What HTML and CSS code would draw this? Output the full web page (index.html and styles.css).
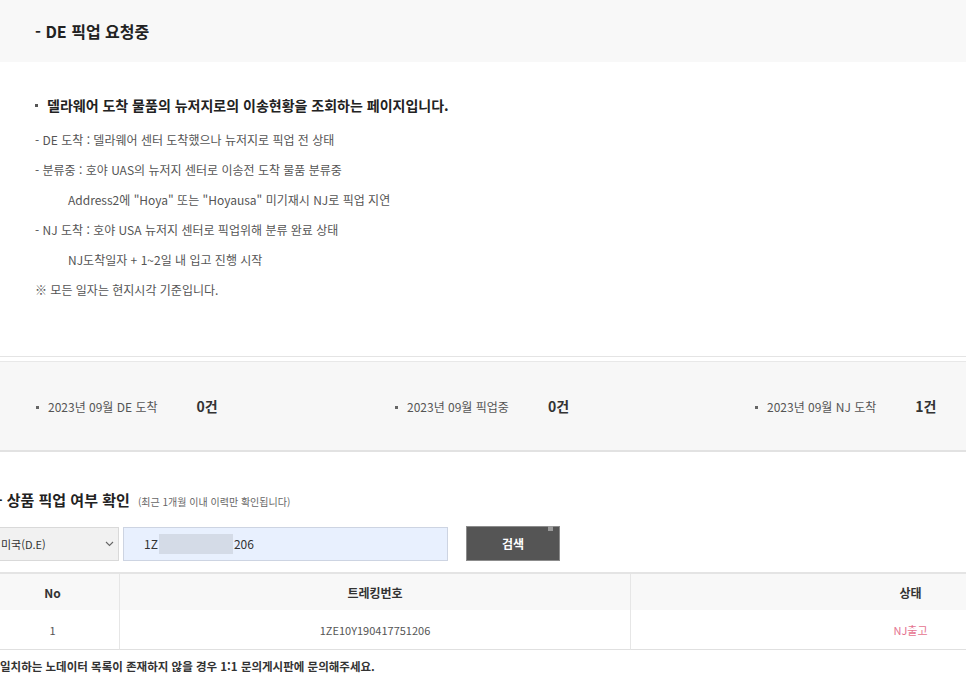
FILE: index.html
```html
<!DOCTYPE html>
<html lang="ko">
<head>
  <meta charset="UTF-8" />
  <meta name="viewport" content="width=device-width, initial-scale=1" />
  <title>DE 픽업 요청중</title>
  <link rel="stylesheet" href="styles.css">
</head>
<body>
  <div class="page">
    <!-- Page title band -->
    <div class="page-head">- DE 픽업 요청중</div>

    <!-- Description -->
    <div class="intro">
      <p class="intro-title">델라웨어 도착 물품의 뉴저지로의 이송현황을 조회하는 페이지입니다.</p>
      <ul class="intro-list">
        <li>- DE 도착 : 델라웨어 센터 도착했으나 뉴저지로 픽업 전 상태</li>
        <li>- 분류중 : 호야 UAS의 뉴저지 센터로 이송전 도착 물품 분류중</li>
        <li class="sub">Address2에 "Hoya" 또는 "Hoyausa" 미기재시 NJ로 픽업 지연</li>
        <li>- NJ 도착 : 호야 USA 뉴저지 센터로 픽업위해 분류 완료 상태</li>
        <li class="sub">NJ도착일자 + 1~2일 내 입고 진행 시작</li>
        <li>※ 모든 일자는 현지시각 기준입니다.</li>
      </ul>
    </div>

    <!-- Monthly counts -->
    <div class="stats">
      <div class="stat"><span class="stat-label">2023년 09월 DE 도착</span><b class="stat-value">0건</b></div>
      <div class="stat"><span class="stat-label">2023년 09월 픽업중</span><b class="stat-value">0건</b></div>
      <div class="stat"><span class="stat-label">2023년 09월 NJ 도착</span><b class="stat-value">1건</b></div>
    </div>

    <!-- Pickup lookup -->
    <div class="lookup">
      <h3 class="lookup-title">- 상품 픽업 여부 확인 <small>(최근 1개월 이내 이력만 확인됩니다)</small></h3>

      <div class="search">
        <div class="select">
          <span>미국(D.E)</span>
          <svg width="9" height="6" viewBox="0 0 9 6"><path d="M1 1l3.5 3.5L8 1" fill="none" stroke="#666" stroke-width="1.1"/></svg>
        </div>
        <div class="input">
          <span>1Z</span><span class="blur"></span><span>206</span>
        </div>
        <button class="btn-search">검색<i class="grip"></i></button>
      </div>

      <table class="result">
        <thead>
          <tr><th class="c-no">No</th><th class="c-track">트레킹번호</th><th class="c-state">상태</th></tr>
        </thead>
        <tbody>
          <tr><td>1</td><td>1ZE10Y190417751206</td><td class="state-out">NJ출고</td></tr>
        </tbody>
      </table>

      <p class="notice">일치하는 노데이터 목록이 존재하지 않을 경우 1:1 문의게시판에 문의해주세요.</p>
    </div>
  </div>
</body>
</html>
```

FILE: styles.css
```css
/* Reset */
* { margin: 0; padding: 0; box-sizing: border-box; }
html, body { width: 100%; height: 100%; }
body {
  background: #fff;
  color: #555;
  font-family: "Noto Sans CJK KR", "Noto Sans", sans-serif;
  overflow: hidden;
}
ul { list-style: none; }

/* Page is wider than the window, slightly scrolled */
.page {
  width: 1204px;
  margin-left: -14px;
}

/* Title band */
.page-head {
  height: 62px;
  display: flex;
  align-items: center;
  padding-left: 49px;
  background: #f8f8f8;
  color: #222;
  font-size: 16px;
  font-weight: 700;
}

/* Description */
.intro {
  padding: 31px 49px 51px;
  border-bottom: 1px solid #e4e4e4;
}
.intro-title {
  position: relative;
  padding-left: 12px;
  line-height: 24px;
  font-size: 14px;
  font-weight: 700;
  color: #222;
}
.intro-title::before {
  content: "";
  position: absolute;
  left: 0;
  top: 11px;
  width: 3px;
  height: 3px;
  background: #555;
}
.intro-list {
  margin-top: 8px;
  font-size: 12px;
  line-height: 30px;
  color: #555;
}
.intro-list .sub { padding-left: 33px; }

/* Monthly counts */
.stats {
  margin-top: 4px;
  height: 91px;
  display: grid;
  grid-template-columns: 359px 360px auto;
  align-items: center;
  padding-left: 50px;
  background: #f7f7f7;
  border-top: 1px solid #e8e8e8;
  border-bottom: 2px solid #e2e2e2;
}
.stat {
  display: flex;
  align-items: center;
  font-size: 12px;
}
.stat-label {
  position: relative;
  padding-left: 12px;
  color: #555;
}
.stat-label::before {
  content: "";
  position: absolute;
  left: 0;
  top: 8px;
  width: 3px;
  height: 3px;
  background: #666;
}
.stat-value {
  margin-left: 39px;
  color: #333;
  font-size: 14px;
}

/* Lookup */
.lookup { margin-top: 36px; }
.lookup-title {
  height: 24px;
  padding-left: 11px;
  line-height: 24px;
  font-size: 15px;
  font-weight: 700;
  color: #222;
}
.lookup-title small {
  margin-left: 4px;
  line-height: 1;
  font-size: 10px;
  font-weight: 400;
  color: #666;
}

.search {
  margin-top: 14px;
  height: 35px;
  display: flex;
  align-items: center;
}
.select {
  width: 133px;
  height: 34px;
  display: flex;
  align-items: center;
  justify-content: space-between;
  padding: 0 4px 0 14px;
  background: #f1f1f1;
  border: 1px solid #d9d9d9;
  font-size: 11px;
  color: #333;
}
.input {
  margin-left: 4px;
  width: 325px;
  height: 34px;
  display: flex;
  align-items: center;
  padding-left: 20px;
  background: #e8f0fe;
  border: 1px solid #cdd4e2;
  font-size: 12px;
  color: #333;
}
.blur {
  width: 74px;
  height: 20px;
  margin: 0 1px;
  background: #d4dbe7;
}
.btn-search {
  position: relative;
  margin-left: 18px;
  width: 94px;
  height: 35px;
  background: #555;
  border: 1px solid #8c8c8c;
  color: #fff;
  font-family: inherit;
  font-size: 12px;
  font-weight: 700;
}
.grip {
  position: absolute;
  top: -1px;
  right: 6px;
  width: 5px;
  height: 5px;
  background: #9a9a9a;
}

/* Result table */
.result {
  margin-top: 11px;
  width: 100%;
  border-collapse: separate;
  border-spacing: 0;
  border-top: 2px solid #e4e4e4;
  font-size: 11px;
  text-align: center;
}
.result th {
  height: 36px;
  background: #f8f8f8;
  color: #333;
  font-weight: 700;
  font-size: 12px;
}
.result td {
  height: 40px;
  color: #555;
  border-bottom: 1px solid #e0e0e0;
}
.result th + th, .result td + td { border-left: 1px solid #e6e6e6; }
.c-no { width: 133px; }
.c-track { width: 511px; }
.result td.state-out { color: #e5738f; }

.notice {
  margin-top: 8px;
  padding-left: 14px;
  line-height: 16px;
  font-size: 11.5px;
  font-weight: 700;
  color: #333;
}
```
